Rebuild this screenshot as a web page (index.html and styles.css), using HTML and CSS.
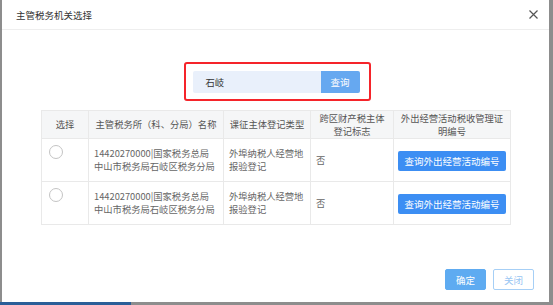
FILE: index.html
```html
<!DOCTYPE html>
<html lang="zh">
<head>
    <meta charset="UTF-8">
    <title>主管税务机关选择</title>
    <link rel="stylesheet" href="styles.css">
</head>
<body>
    <div class="dialog">
        <div class="dialog-header">
            <span class="dialog-title">主管税务机关选择</span>
            <span class="close-btn">
                <svg width="9" height="9" viewBox="0 0 9 9"><path d="M0.5 0.5L8.5 8.5M8.5 0.5L0.5 8.5" stroke="#555" stroke-width="1.2" fill="none"/></svg>
            </span>
        </div>
        <div class="dialog-body">
            <div class="search-wrap">
                <div class="search-box">
                    <div class="search-input">石岐</div>
                    <button class="search-btn">查询</button>
                </div>
            </div>
            <table class="result-table">
                <colgroup>
                    <col class="col-select">
                    <col class="col-name">
                    <col class="col-type">
                    <col class="col-flag">
                    <col class="col-num">
                </colgroup>
                <thead>
                    <tr>
                        <th>选择</th>
                        <th>主管税务所（科、分局）名称</th>
                        <th>课征主体登记类型</th>
                        <th>跨区财产税主体<br>登记标志</th>
                        <th>外出经营活动税收管理证<br>明编号</th>
                    </tr>
                </thead>
                <tbody>
                    <tr>
                        <td class="cell-radio"><span class="radio"></span></td>
                        <td>14420270000|国家税务总局<br>中山市税务局石岐区税务分局</td>
                        <td>外埠纳税人经营地<br>报验登记</td>
                        <td>否</td>
                        <td class="cell-btn"><button class="query-btn">查询外出经营活动编号</button></td>
                    </tr>
                    <tr>
                        <td class="cell-radio"><span class="radio"></span></td>
                        <td>14420270000|国家税务总局<br>中山市税务局石岐区税务分局</td>
                        <td>外埠纳税人经营地<br>报验登记</td>
                        <td>否</td>
                        <td class="cell-btn"><button class="query-btn">查询外出经营活动编号</button></td>
                    </tr>
                </tbody>
            </table>
        </div>
        <div class="dialog-footer">
            <button class="btn-ok">确定</button>
            <button class="btn-close">关闭</button>
        </div>
    </div>
    <div class="taskbar"><div class="taskbar-left"></div></div>
</body>
</html>
```

FILE: styles.css
```css
html, body {
    margin: 0;
    padding: 0;
}
body {
    width: 553px;
    height: 305px;
    overflow: hidden;
    background: #8d8d8d;
    font-family: "Noto Sans CJK SC", "Liberation Sans", sans-serif;
    font-size: 9.3px;
    color: #666;
}
.dialog {
    width: 547px;
    height: 302px;
    margin-left: 2px;
    background: #fff;
    display: flex;
    flex-direction: column;
}
.dialog-header {
    height: 29px;
    border-bottom: 1px solid #eeeeee;
    display: flex;
    align-items: center;
    justify-content: space-between;
    padding: 0 11px 0 14px;
}
.dialog-title {
    font-size: 9.5px;
    color: #333;
}
.close-btn {
    display: flex;
}
.dialog-body {
    flex: 1;
    display: flex;
    flex-direction: column;
    align-items: center;
}
.search-wrap {
    margin-top: 32px;
    margin-left: 3px;
}
.search-box {
    display: flex;
    border: 2px solid #f5242a;
    border-radius: 3px;
    padding: 7px 9px 6px 7px;
}
.search-input {
    width: 115px;
    height: 22px;
    line-height: 22px;
    padding-left: 13px;
    background: #e9f0fb;
    color: #333;
    border-radius: 2px 0 0 2px;
}
.search-btn {
    width: 39px;
    height: 22px;
    border: none;
    padding: 0;
    background: #66a8f0;
    color: #fff;
    font-family: inherit;
    font-size: 9.5px;
    border-radius: 0 2px 2px 0;
}
.result-table {
    margin-top: 9px;
    border-collapse: collapse;
    table-layout: fixed;
    width: 469px;
    margin-left: 1px;
}
.col-select { width: 47px; }
.col-name { width: 135px; }
.col-type { width: 87px; }
.col-flag { width: 83px; }
.col-num { width: 117px; }
.result-table th,
.result-table td {
    border: 1px solid #e9e9e9;
    white-space: nowrap;
    overflow: hidden;
}
.result-table th {
    background: #f5f6f7;
    font-weight: normal;
    color: #555;
    height: 27px;
    line-height: 13px;
    padding: 0 2px;
    text-align: center;
}
.result-table td {
    height: 36px;
    line-height: 13px;
    padding: 0 5px;
    vertical-align: middle;
}
.cell-radio {
    vertical-align: top !important;
    padding: 6px 0 0 7px !important;
}
.radio {
    display: block;
    width: 12px;
    height: 12px;
    border: 1px solid #c4c4c4;
    border-radius: 50%;
}
.cell-btn {
    text-align: center;
    padding: 0 !important;
}
.query-btn {
    width: 108px;
    height: 20px;
    border: none;
    border-radius: 2px;
    background: #3c8ef3;
    color: #fff;
    font-family: inherit;
    font-size: 9.5px;
    padding: 0;
    margin-top: 1px;
}
.dialog-footer {
    display: flex;
    justify-content: flex-end;
    gap: 7px;
    padding: 0 15px 12px 0;
}
.btn-ok,
.btn-close {
    width: 41px;
    height: 21px;
    border-radius: 2px;
    font-family: inherit;
    font-size: 9.5px;
    padding: 0;
}
.btn-ok {
    background: #5eabf1;
    border: 1px solid #5eabf1;
    color: #fff;
}
.btn-close {
    background: #fff;
    border: 1px solid #a6cff6;
    color: #99c6f3;
}
.taskbar {
    height: 3px;
    background: #8d8d8d;
}
.taskbar-left {
    width: 131px;
    height: 3px;
    background: #2a5e98;
}
```
